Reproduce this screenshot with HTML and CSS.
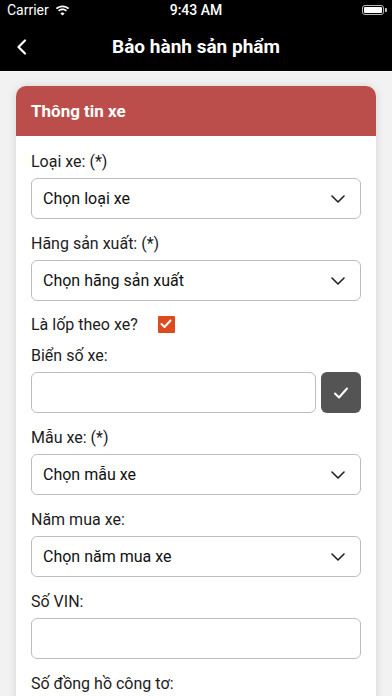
FILE: index.html
```html
<!DOCTYPE html>
<html lang="vi">
<head>
    <meta charset="UTF-8">
    <meta name="viewport" content="width=device-width, initial-scale=1.0">
    <title>Bảo hành sản phẩm</title>
    <link rel="stylesheet" href="styles.css">
</head>
<body>
    <div class="screen">
        <div class="status-bar">
            <div class="status-left">
                <span>Carrier</span>
                <svg class="wifi" width="15" height="11" viewBox="0 0 15 11">
                    <path d="M7.5 2.2c2.1 0 4 .8 5.5 2.1l1.2-1.3C12.4 1.4 10 .4 7.5.4S2.6 1.4.8 3l1.2 1.3c1.5-1.3 3.4-2.1 5.5-2.1z" fill="#fff"/>
                    <path d="M7.5 5.3c1.3 0 2.4.5 3.3 1.2L12 5.2C10.8 4.2 9.2 3.5 7.5 3.5S4.2 4.2 3 5.2l1.2 1.3c.9-.7 2-1.200 3.3-1.2z" fill="#fff"/>
                    <path d="M7.5 10.6L9.6 8.4c-.6-.5-1.3-.8-2.1-.8s-1.5.3-2.1.8z" fill="#fff"/>
                </svg>
            </div>
            <div class="status-time">9:43 AM</div>
            <div class="status-right">
                <div class="battery"><div class="battery-level"></div></div>
                <div class="battery-tip"></div>
            </div>
        </div>

        <nav class="navbar">
            <svg class="back" width="12" height="16" viewBox="0 0 12 16">
                <path d="M9 1.5L2.5 8 9 14.5" fill="none" stroke="#fff" stroke-width="2.2" stroke-linecap="round" stroke-linejoin="round"/>
            </svg>
            <h1>Bảo hành sản phẩm</h1>
        </nav>

        <div class="content">
            <div class="card">
                <div class="card-header">Thông tin xe</div>
                <div class="card-body">
                    <div class="field">
                        <label>Loại xe: (*)</label>
                        <div class="select">
                            <span>Chọn loại xe</span>
                            <svg class="chevron" width="14" height="8" viewBox="0 0 14 8"><path d="M1 1l6 6 6-6" fill="none" stroke="#222" stroke-width="1.6" stroke-linecap="round" stroke-linejoin="round"/></svg>
                        </div>
                    </div>
                    <div class="field">
                        <label>Hãng sản xuất: (*)</label>
                        <div class="select">
                            <span>Chọn hãng sản xuất</span>
                            <svg class="chevron" width="14" height="8" viewBox="0 0 14 8"><path d="M1 1l6 6 6-6" fill="none" stroke="#222" stroke-width="1.6" stroke-linecap="round" stroke-linejoin="round"/></svg>
                        </div>
                    </div>
                    <div class="check-row">
                        <span>Là lốp theo xe?</span>
                        <div class="checkbox">
                            <svg width="12" height="10" viewBox="0 0 12 10"><path d="M1.5 5l3 3 6-6.5" fill="none" stroke="#fff" stroke-width="2" stroke-linecap="round" stroke-linejoin="round"/></svg>
                        </div>
                    </div>
                    <div class="field">
                        <label>Biển số xe:</label>
                        <div class="input-row">
                            <div class="input"></div>
                            <button class="check-btn">
                                <svg width="16" height="12" viewBox="0 0 16 12"><path d="M2 6.5l4 4 8-9" fill="none" stroke="#fff" stroke-width="2" stroke-linecap="round" stroke-linejoin="round"/></svg>
                            </button>
                        </div>
                    </div>
                    <div class="field">
                        <label>Mẫu xe: (*)</label>
                        <div class="select">
                            <span>Chọn mẫu xe</span>
                            <svg class="chevron" width="14" height="8" viewBox="0 0 14 8"><path d="M1 1l6 6 6-6" fill="none" stroke="#222" stroke-width="1.6" stroke-linecap="round" stroke-linejoin="round"/></svg>
                        </div>
                    </div>
                    <div class="field">
                        <label>Năm mua xe:</label>
                        <div class="select">
                            <span>Chọn năm mua xe</span>
                            <svg class="chevron" width="14" height="8" viewBox="0 0 14 8"><path d="M1 1l6 6 6-6" fill="none" stroke="#222" stroke-width="1.6" stroke-linecap="round" stroke-linejoin="round"/></svg>
                        </div>
                    </div>
                    <div class="field">
                        <label>Số VIN:</label>
                        <div class="input"></div>
                    </div>
                    <div class="field">
                        <label>Số đồng hồ công tơ:</label>
                        <div class="input"></div>
                    </div>
                </div>
            </div>
        </div>
    </div>
</body>
</html>
```

FILE: styles.css
```css
* {
    margin: 0;
    padding: 0;
    box-sizing: border-box;
    font-family: Roboto, 'Noto Sans', sans-serif;
}

body {
    background: #f2f2f2;
}

.screen {
    height: 100vh;
    overflow: hidden;
}

.status-bar {
    height: 20px;
    background: #000;
    color: #fff;
    display: flex;
    align-items: center;
    justify-content: space-between;
    padding: 0 5px 0 7px;
    font-size: 14px;
    position: relative;
}

.status-left {
    display: flex;
    align-items: center;
    gap: 6px;
}

.status-time {
    position: absolute;
    left: 0;
    right: 0;
    text-align: center;
    font-weight: 500;
    pointer-events: none;
}

.status-right {
    display: flex;
    align-items: center;
}

.battery {
    width: 22px;
    height: 10px;
    border: 1px solid #bbb;
    border-radius: 3px;
    padding: 1px;
}

.battery-level {
    width: 100%;
    height: 100%;
    background: #fff;
    border-radius: 1px;
}

.battery-tip {
    width: 2px;
    height: 4px;
    background: #bbb;
    border-radius: 0 1px 1px 0;
    margin-left: 1px;
}

.navbar {
    height: 52px;
    background: #000;
    display: flex;
    align-items: center;
    justify-content: center;
    position: relative;
    border-bottom: 1px solid #fafafa;
}

.navbar .back {
    position: absolute;
    left: 16px;
    top: 19px;
}

.navbar h1 {
    color: #fff;
    font-size: 19px;
    font-weight: 700;
    margin-top: 1px;
}

.content {
    padding: 14px 16px;
}

.card {
    background: #fff;
    border-radius: 10px;
    box-shadow: 0 0 10px rgba(0, 0, 0, 0.12);
    overflow: hidden;
}

.card-header {
    height: 50px;
    background: #bb4d4a;
    color: #fff;
    font-size: 17px;
    font-weight: 700;
    padding: 0 15px;
    display: flex;
    align-items: center;
}

.card-body {
    padding: 16px 15px 15px;
    display: flex;
    flex-direction: column;
    gap: 15px;
}

.field label {
    display: block;
    font-size: 16px;
    line-height: 20px;
    color: #1c1c1c;
    margin-bottom: 6px;
}

.select,
.input {
    height: 41px;
    border: 1px solid #bdbdbd;
    border-radius: 6px;
    background: #fff;
}

.select {
    display: flex;
    align-items: center;
    justify-content: space-between;
    padding: 0 15px 0 11px;
    font-size: 16px;
    color: #111;
}

.check-row {
    height: 16px;
    margin-bottom: -1px;
    display: flex;
    align-items: center;
    gap: 20px;
    font-size: 16px;
    color: #1c1c1c;
}

.checkbox {
    width: 17px;
    height: 17px;
    background: #dd4a1d;
    border-radius: 1px;
    display: flex;
    align-items: center;
    justify-content: center;
}

.input-row {
    display: flex;
    gap: 5px;
}

.input-row .input {
    flex: 1;
}

.check-btn {
    width: 40px;
    height: 41px;
    border: none;
    border-radius: 6px;
    background: #545454;
    display: flex;
    align-items: center;
    justify-content: center;
}
```
